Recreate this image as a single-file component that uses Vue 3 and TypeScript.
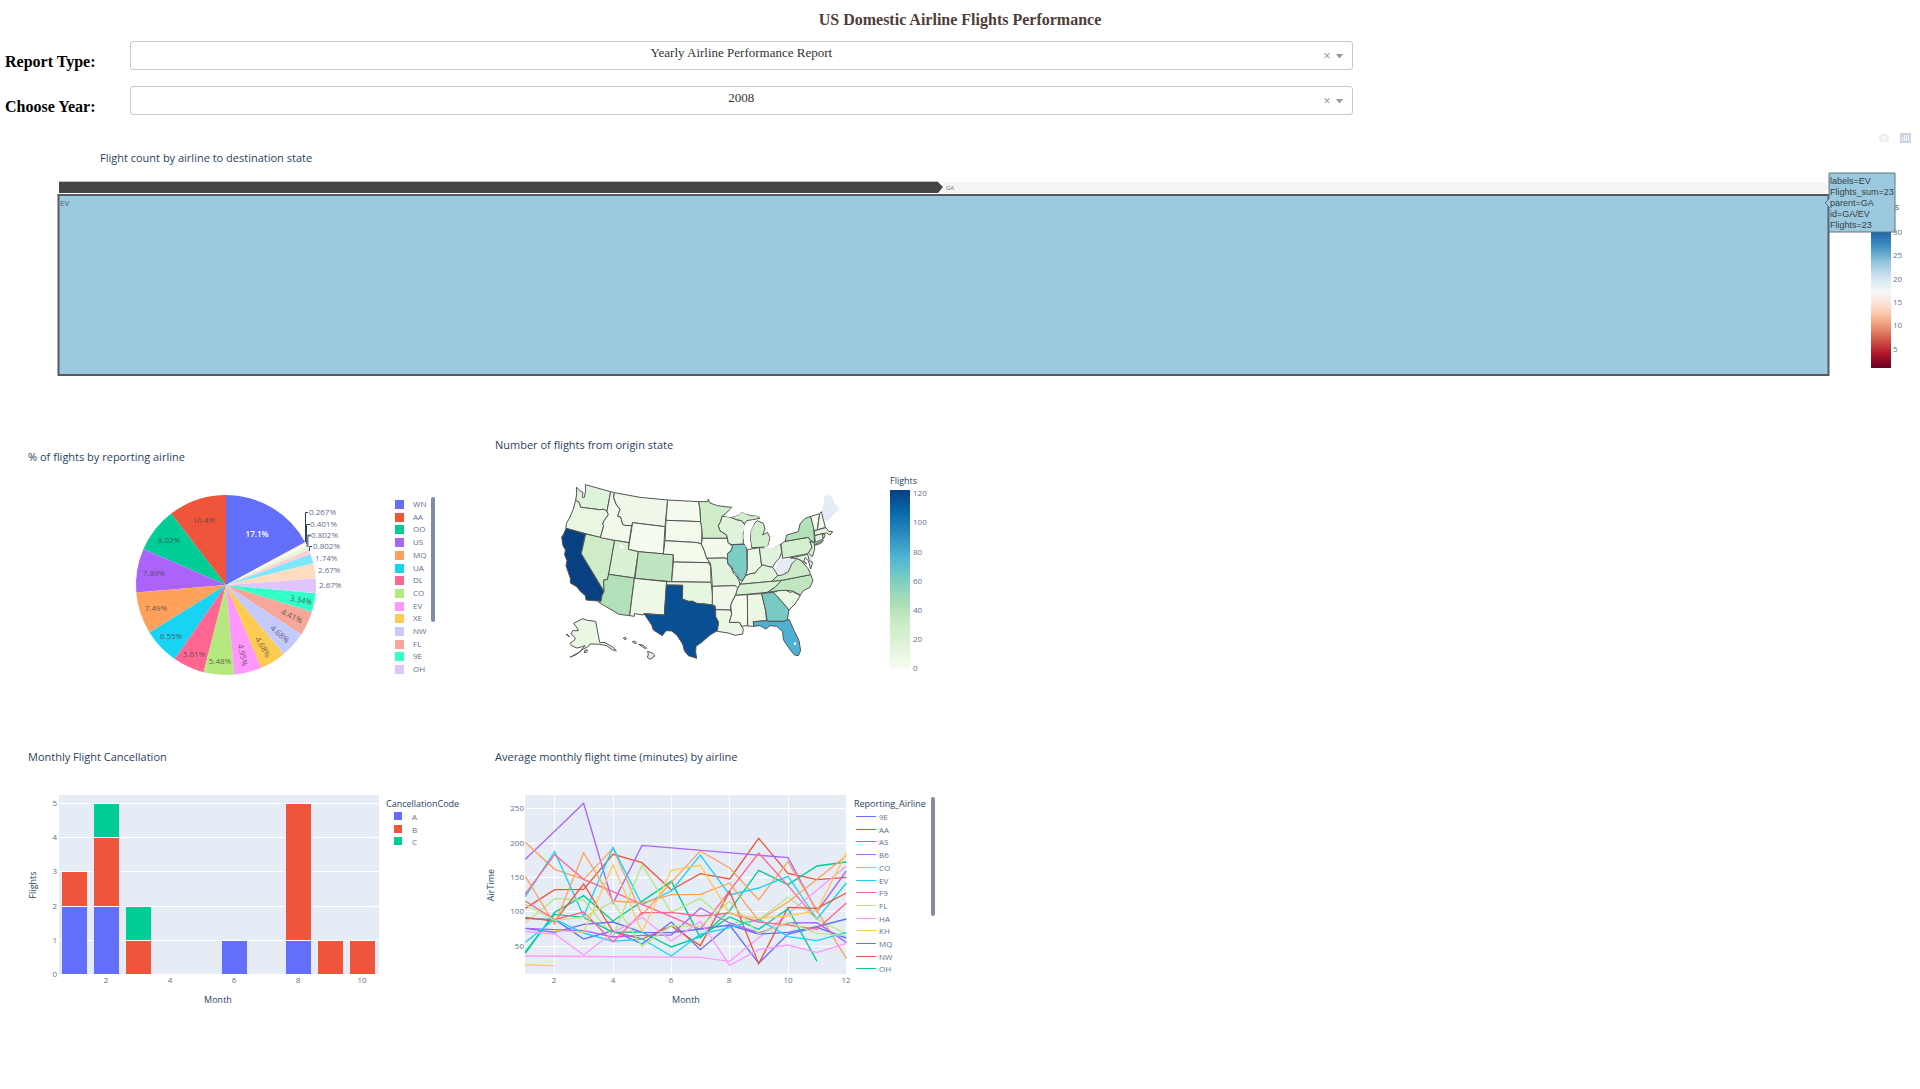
<script setup lang="ts">
import { ref } from 'vue'

const report = ref('Yearly Airline Performance Report')
const year = ref('2008')
const reports = ['Yearly Airline Performance Report', 'Yearly Airline Delay Report']
const years = Array.from({ length: 16 }, (_, i) => String(2005 + i))

const hoverLines = ['labels=EV', 'Flights_sum=23', 'parent=GA', 'id=GA/EV', 'Flights=23']

const rdbu = ['#053061', '#2166ac', '#4393c3', '#92c5de', '#d1e5f0', '#f7f7f7', '#fddbc7', '#f4a582', '#d6604d', '#b2182b', '#67001f']
const gnbu = ['#084081', '#0868ac', '#2b8cbe', '#4eb3d3', '#7bccc4', '#a8ddb5', '#ccebc5', '#e0f3db', '#f7fcf0']

const treeTicks = [
  { v: 30, y: 236 }, { v: 25, y: 259 }, { v: 20, y: 283 },
  { v: 15, y: 306 }, { v: 10, y: 329 }, { v: 5, y: 353 },
]
const mapTicks = [
  { v: 120, y: 497 }, { v: 100, y: 526 }, { v: 80, y: 556 }, { v: 60, y: 585 },
  { v: 40, y: 614 }, { v: 20, y: 643 }, { v: 0, y: 672 },
]

interface Slice { name: string; n: number; color: string }
const airlines: Slice[] = [
  { name: 'WN', n: 128, color: '#636efa' },
  { name: 'AA', n: 78, color: '#ef553b' },
  { name: 'OO', n: 60, color: '#00cc96' },
  { name: 'US', n: 59, color: '#ab63fa' },
  { name: 'MQ', n: 56, color: '#ffa15a' },
  { name: 'UA', n: 49, color: '#19d3f3' },
  { name: 'DL', n: 42, color: '#ff6692' },
  { name: 'CO', n: 41, color: '#b6e880' },
  { name: 'EV', n: 37, color: '#ff97ff' },
  { name: 'XE', n: 35, color: '#fecb52' },
  { name: 'NW', n: 35, color: '#c5cafd' },
  { name: 'FL', n: 33, color: '#f7a799' },
  { name: '9E', n: 25, color: '#33ffc9' },
  { name: 'OH', n: 20, color: '#dfc5fd' },
  { name: 'YV', n: 20, color: '#ffdbc0' },
  { name: 'B6', n: 13, color: '#7ee7f9' },
  { name: 'AS', n: 6, color: '#ffcbda' },
  { name: 'F9', n: 6, color: '#e6f7d4' },
  { name: 'HA', n: 3, color: '#fffaff' },
  { name: 'AQ', n: 2, color: '#ffe9ba' },
]
const cx = 226
const cy = 586
const radius = 90
const total = airlines.reduce((s, a) => s + a.n, 0)
const point = (t: number) => {
  const a = t * 2 * Math.PI
  return `${(cx + radius * Math.sin(a)).toFixed(1)},${(cy - radius * Math.cos(a)).toFixed(1)}`
}
// The largest slice sits right of twelve o'clock, the others run counter-clockwise from there.
let cursor = airlines[0].n / total
const slices = airlines.map((a) => {
  const end = cursor
  const start = end - a.n / total
  cursor = start
  return { name: a.name, color: a.color, d: `M${cx},${cy}L${point(start)}A${radius},${radius} 0 0 1 ${point(end)}Z` }
})

const pieLabels = [
  { t: '10.4%', x: 204, y: 521, r: 0 },
  { t: '8.02%', x: 169, y: 541, r: 0 },
  { t: '7.89%', x: 154, y: 574, r: 0 },
  { t: '7.49%', x: 156, y: 609, r: 0 },
  { t: '6.55%', x: 171, y: 637, r: 0 },
  { t: '5.61%', x: 194, y: 655, r: 0 },
  { t: '5.48%', x: 220, y: 662, r: 0 },
  { t: '4.95%', x: 243, y: 656, r: 77 },
  { t: '4.68%', x: 263, y: 648, r: 60 },
  { t: '4.68%', x: 280, y: 635, r: 42 },
  { t: '4.41%', x: 292, y: 617, r: 25 },
  { t: '3.34%', x: 301, y: 601, r: 11 },
]
const outerLabels = [
  { t: '0.267%', x: 309, y: 516 },
  { t: '0.401%', x: 310, y: 528 },
  { t: '0.802%', x: 311, y: 539 },
  { t: '0.802%', x: 313, y: 550 },
  { t: '1.74%', x: 315, y: 562 },
  { t: '2.67%', x: 318, y: 574 },
  { t: '2.67%', x: 319, y: 589 },
]
const legendY = (first: number, i: number) => Math.round(first + i * 12.7)

const states = [
  { id: 'WA', f: '#dff3da', p: '289,174 300,186 309,190 307,205 313,205 317,185 316,167 392,188 381,247 372,241 358,242 320,237 302,235 297,220 287,214 290,195' },
  { id: 'OR', f: '#e8f6e2', p: '287,214 297,220 302,235 320,237 358,242 372,241 381,247 385,257 373,274 368,285 371,290 361,326 258,298 259,283 268,268 280,240' },
  { id: 'CA', f: '#084081', p: '258,298 317,315 304,374 372,487 366,500 363,517 318,513 316,500 301,487 290,473 271,462 271,448 263,425 258,410 261,395 254,378 256,362 249,350 245,325 251,315' },
  { id: 'NV', f: '#ceecc7', p: '317,315 404,334 386,436 382,452 371,453 372,487 304,374' },
  { id: 'ID', f: '#f1f9ea', p: '392,188 403,191 401,206 408,225 420,241 413,262 422,264 428,286 434,289 455,290 447,341 404,334 361,326 371,290 368,285 373,274 385,257 381,247' },
  { id: 'MT', f: '#eff8e8', p: '403,191 480,205 563,213 555,293 458,281 455,290 434,289 428,286 422,264 413,262 420,241 408,225 401,206' },
  { id: 'WY', f: '#f5fbee', p: '458,281 555,293 550,375 475,368 445,361' },
  { id: 'UT', f: '#daf1d4', p: '404,334 447,341 445,361 475,368 463,447 386,436' },
  { id: 'CO', f: '#bfe6c0', p: '475,368 580,377 575,458 465,448' },
  { id: 'AZ', f: '#b2e1b9', p: '386,436 463,447 449,560 417,556 356,520 363,517 366,500 372,487 371,453 382,452' },
  { id: 'NM', f: '#eef8e7', p: '463,448 560,458 553,558 492,554 490,558 463,554 463,562 449,560' },
  { id: 'ND', f: '#f5fbee', p: '563,213 656,218 660,240 662,278 558,274' },
  { id: 'SD', f: '#f3faec', p: '558,274 662,278 666,300 665,345 652,341 640,340 555,335' },
  { id: 'NE', f: '#f3faec', p: '555,335 640,340 652,341 664,345 673,365 680,387 690,401 580,399 580,377 550,375' },
  { id: 'KS', f: '#f0f9e9', p: '580,399 686,401 692,413 693,460 575,458' },
  { id: 'OK', f: '#e6f6e0', p: '560,458 693,460 698,500 697,528 675,525 650,523 638,517 625,517 607,510 608,469 559,468' },
  { id: 'TX', f: '#084f93', p: '559,468 608,469 607,510 625,517 638,517 650,523 675,525 697,528 705,530 707,562 716,580 712,605 690,618 665,640 648,652 647,670 650,688 625,680 613,665 608,645 590,618 575,606 558,605 547,620 520,603 515,588 492,554 553,558' },
  { id: 'MN', f: '#d0edca', p: '656,218 684,218 684,210 690,222 712,230 735,233 757,235 735,255 726,262 722,278 715,290 720,305 740,318 741,328 667,328 666,305 662,278 660,240' },
  { id: 'IA', f: '#f1f9ea', p: '667,328 741,328 745,342 758,352 752,367 743,373 742,390 735,387 680,388 673,365 664,345' },
  { id: 'MO', f: '#e2f4dd', p: '680,388 735,387 742,390 744,405 756,420 760,433 768,440 776,452 780,466 772,480 765,470 697,472 693,413 690,401' },
  { id: 'AR', f: '#eff8e8', p: '697,472 765,470 775,478 767,497 757,517 752,530 752,543 707,542 705,530 697,528' },
  { id: 'LA', f: '#e9f7e3', p: '707,542 752,543 755,555 748,580 779,580 783,590 790,600 788,615 765,619 745,612 712,607 716,580 707,562' },
  { id: 'WI', f: '#dff3da', p: '735,262 752,265 770,272 785,275 793,285 797,295 790,312 790,345 755,347 745,342 740,318 720,305 715,290 722,278 726,262' },
  { id: 'IL', f: '#7bccc4', p: '755,347 795,346 800,360 802,420 797,440 788,455 778,452 770,436 758,425 757,415 744,405 742,390 743,373 752,367 758,352' },
  { id: 'MI', f: '#d1edcb', p: '815,356 811,330 812,305 822,285 832,275 850,283 855,300 848,318 862,310 870,325 866,345 860,354' },
  { id: 'MI-U', f: '#d1edcb', p: '752,265 775,258 785,248 798,255 815,260 830,260 840,268 818,272 800,275 793,285 785,275 770,272' },
  { id: 'IN', f: '#eaf7e4', p: '802,362 838,356 845,410 835,420 825,432 812,434 797,440 802,420' },
  { id: 'OH', f: '#e0f3db', p: '838,356 862,356 875,358 902,343 905,370 898,388 885,402 878,415 862,412 850,408 845,410' },
  { id: 'KY', f: '#e0f3db', p: '780,466 788,455 797,440 812,434 825,432 835,420 845,410 850,408 862,412 878,415 888,430 893,440 875,457' },
  { id: 'TN', f: '#d7f0d1', p: '767,499 772,480 780,466 875,457 905,454 885,475 862,490' },
  { id: 'MS', f: '#f4fbed', p: '767,499 802,497 803,555 802,590 785,592 779,580 748,580 755,555 752,530 757,517' },
  { id: 'AL', f: '#e9f7e3', p: '802,497 845,494 856,540 860,575 820,578 821,592 803,591' },
  { id: 'GA', f: '#78cac5', p: '845,494 880,490 890,500 912,525 927,543 922,572 912,577 862,577 856,540' },
  { id: 'FL', f: '#4cb1d2', p: '820,578 860,575 862,577 912,577 922,572 928,572 940,600 957,635 962,665 955,680 943,678 925,655 910,632 908,608 890,592 870,590 858,600 840,590 821,592' },
  { id: 'SC', f: '#e9f7e3', p: '880,490 895,485 918,484 930,490 938,488 961,500 945,525 927,543 912,525 890,500' },
  { id: 'NC', f: '#bfe6c0', p: '905,454 992,437 999,455 990,475 970,485 961,498 938,486 918,484 895,485 862,490 885,475' },
  { id: 'VA', f: '#cdecc6', p: '875,457 893,440 907,438 925,428 935,405 945,395 950,388 962,394 975,408 985,420 992,437 905,454' },
  { id: 'MD', f: '#e0f3db', p: '930,387 983,376 988,395 998,400 992,420 985,395 975,386 972,396 980,405 965,395 950,388' },
  { id: 'PA', f: '#d4efce', p: '903,345 915,337 985,325 992,335 990,342 998,352 985,372 975,376 908,388' },
  { id: 'NJ', f: '#d4efce', p: '990,336 1003,342 1004,360 997,383 985,372 996,355' },
  { id: 'NY', f: '#b2e1b9', p: '915,337 920,318 955,308 960,285 975,268 992,262 1000,290 1004,340 992,335 985,325' },
  { id: 'NY-L', f: '#b2e1b9', p: '1005,346 1030,334 1022,343 1006,349' },
  { id: 'VT', f: '#f4fbed', p: '992,262 1019,254 1015,280 1012,303 1003,305' },
  { id: 'NH', f: '#f1f9ea', p: '1019,254 1024,248 1036,295 1012,303' },
  { id: 'MA', f: '#e4f5df', p: '1003,305 1038,296 1046,307 1058,308 1050,318 1040,312 1027,314 1004,320' },
  { id: 'CT', f: '#e4f5df', p: '1004,320 1027,314 1030,330 1006,340' },
  { id: 'RI', f: '#f1f9ea', p: '1027,314 1036,318 1030,330' },
  { id: 'AK', f: '#e9f7e3', p: '281,583 308,569 322,574 347,577 359,640 375,641 400,655 409,666 397,662 380,650 360,646 345,645 330,645 326,652 310,660 290,676 270,685 300,668 315,650 300,655 290,657 275,650 270,643 285,632 285,625 273,615 278,605 295,605 290,595' },
  { id: 'AK-A', f: '#e9f7e3', p: '258,615 264,618 269,623 263,621' },
  { id: 'AK-B', f: '#e9f7e3', p: '314,664 322,662 320,670 313,671' },
  { id: 'HI', f: '#dff3da', p: '503,667 517,672 525,681 510,691 502,685 505,677' },
  { id: 'HI-A', f: '#dff3da', p: '430,627 436,625 439,630 434,632' },
  { id: 'HI-B', f: '#dff3da', p: '457,638 464,636 470,642 462,643' },
  { id: 'HI-C', f: '#dff3da', p: '476,646 486,648 492,650 496,654 500,658 492,657 484,651' },
]

interface Bar { m: number; from: number; to: number; color: string }
const codes = [
  { name: 'A', color: '#636efa' },
  { name: 'B', color: '#ef553b' },
  { name: 'C', color: '#00cc96' },
]
const bars: Bar[] = [
  { m: 1, from: 0, to: 2, color: '#636efa' },
  { m: 1, from: 2, to: 3, color: '#ef553b' },
  { m: 2, from: 0, to: 2, color: '#636efa' },
  { m: 2, from: 2, to: 4, color: '#ef553b' },
  { m: 2, from: 4, to: 5, color: '#00cc96' },
  { m: 3, from: 0, to: 1, color: '#ef553b' },
  { m: 3, from: 1, to: 2, color: '#00cc96' },
  { m: 6, from: 0, to: 1, color: '#636efa' },
  { m: 8, from: 0, to: 1, color: '#636efa' },
  { m: 8, from: 1, to: 5, color: '#ef553b' },
  { m: 9, from: 0, to: 1, color: '#ef553b' },
  { m: 10, from: 0, to: 1, color: '#ef553b' },
]
const barY = (v: number) => Math.round(975 - v * 34.2)
const barX = (m: number) => 42 + m * 32

const palette = ['#636efa', '#ef553b', '#00cc96', '#ab63fa', '#ffa15a', '#19d3f3', '#ff6692', '#b6e880', '#ff97ff', '#fecb52']
const carriers = ['9E', 'AA', 'AS', 'B6', 'CO', 'EV', 'F9', 'FL', 'HA', 'KH', 'MQ', 'NW', 'OH']
// One row per carrier: first month followed by heights on the plot; null skips a month.
const series: { start: number; ys: (number | null)[] }[] = [
  { start: 1, ys: [539, 541, 600, 575, 615, 549, 632, 558, 673, 585, 565, 597] },
  { start: 1, ys: [508, 452, 451, 346, 371, 453, 404, 420, 298, 403, 422, 415] },
  { start: 1, ys: [643, 520, 470, 546, 487, 427, 596, 515, 394, 437, 381, 369] },
  { start: 1, ys: [361, 277, 193, 493, 319, null, null, null, null, 356, 518, 396] },
  { start: 1, ys: [310, 391, 421, 328, 528, 430, 336, 387, 482, 368, 515, 659] },
  { start: 1, ys: [473, 338, 531, 325, 497, 456, 348, 468, 447, 412, 540, 432] },
  { start: 1, ys: [465, 347, 421, 458, 496, 533, 571, 455, 342, 440, 542] },
  { start: 1, ys: [552, 479, 483, 592, 378, 520, 478, 555, 543, 475, 540, 585] },
  { start: 1, ys: [651, null, null, null, null, null, 655, 667, 596, 525, 453, 381] },
  { start: 1, ys: [678, 680] },
  { start: 1, ys: [568, 580, 556, 549, 580, 581, 570, 558, 585, 580, 563, 540] },
  { start: 1, ys: [535, 547, 435, 578, 600, 561, 620, 457, 674, 505, 508, 462] },
  { start: 1, ys: [638, 526, 535, 580, 579, 624, 593, 534, 571, 509, 667] },
  { start: 1, ys: [568, 572, 575, 594, 589, 588, 507, 552, 582, 552, 551, 610] },
  { start: 1, ys: [412, 556, 341, 486, 492, 467, 466, 432, 545, 489, 421, 350] },
  { start: 1, ys: [610, 541, 582, 607, 600, 651, 585, 566, 541, 593, 605, 580] },
  { start: 1, ys: [486, 542, 519, 609, 521, 520, 531, 522, 549, 558, 571, 492] },
  { start: 1, ys: [497, 544, 535, 488, 622, 560, 562, 487, 585, 550, 583, 590] },
  { start: 1, ys: [578, 585, 648, 580, 535, 606, 547, 679, 632, 618, 641, 613] },
  { start: 2, ys: [575, 580, 378, 578, 394, 379, 523, 538, 531, 515, 342] },
]
const lines = series.map((s, i) => ({
  color: palette[i % palette.length],
  points: s.ys
    .map((y, k) => (y === null ? '' : `${Math.round(136 + (s.start - 1 + k) * 87.5)},${y}`))
    .filter(Boolean)
    .join(' '),
}))
const airTicks = [{ v: 250, y: 809 }, { v: 200, y: 844 }, { v: 150, y: 878 }, { v: 100, y: 912 }, { v: 50, y: 947 }]
const monthTicks = [2, 4, 6, 8, 10, 12]
const lineX = (m: number) => Math.round(525 + (m - 1) * 29.2)
</script>

<template>
  <main class="page">
    <h1>US Domestic Airline Flights Performance</h1>

    <form class="filters" @submit.prevent>
      <label for="report">Report Type:</label>
      <div class="dropdown">
        <select id="report" v-model="report">
          <option v-for="r in reports" :key="r">{{ r }}</option>
        </select>
        <span class="controls">
          <button type="button" aria-label="Clear report type">×</button>
          <svg width="7" height="4" viewBox="0 0 7 4" aria-hidden="true"><path d="M0 0H7L4 4H3Z" fill="#999" /></svg>
        </span>
      </div>
      <label for="year">Choose Year:</label>
      <div class="dropdown">
        <select id="year" v-model="year">
          <option v-for="y in years" :key="y">{{ y }}</option>
        </select>
        <span class="controls">
          <button type="button" aria-label="Clear year">×</button>
          <svg width="7" height="4" viewBox="0 0 7 4" aria-hidden="true"><path d="M0 0H7L4 4H3Z" fill="#999" /></svg>
        </span>
      </div>
    </form>

    <div class="modebar">
      <button type="button" aria-label="Download plot as a png">
        <svg width="10" height="10" viewBox="0 0 10 10">
          <path d="M3 1H7L8 2H9Q10 2 10 3V8Q10 9 9 9H1Q0 9 0 8V3Q0 2 1 2H2Z" fill="#eeeeef" />
          <ellipse cx="5" cy="5.5" rx="1.7" ry="2.1" fill="none" stroke="#fff" />
        </svg>
      </button>
      <button type="button" aria-label="Produced with Plotly">
        <svg width="11" height="10" viewBox="0 0 11 10">
          <rect width="11" height="10" fill="#cbd3de" />
          <path d="M2.5 4V8M4.5 2V8M6.5 2V8M8.5 2V8" stroke="#fff" stroke-width=".8" />
        </svg>
      </button>
    </div>

    <figure class="tree">
      <figcaption>Flight count by airline to destination state</figcaption>
      <svg viewBox="0 166 1920 224" role="img" aria-label="Treemap of flights">
        <defs>
          <linearGradient id="rdbu" x1="0" y1="0" x2="0" y2="1">
            <stop v-for="(c, i) in rdbu" :key="c" :offset="i / 10" :stop-color="c" />
          </linearGradient>
        </defs>
        <path d="M943 183H1824L1829 188L1824 194H938Z" fill="#f5f4f2" />
        <path d="M59 183H938L943 188L938 194H59Z" fill="#444" />
        <path d="M59 182.5H938" stroke="#b9c2be" />
        <text x="946" y="191" class="xs">GA</text>
        <rect x="58.5" y="196" width="1770" height="180" fill="#9bc9df" stroke="#555a5e" stroke-width="2" />
        <text x="60" y="207" class="tick dark">EV</text>
        <text x="1899" y="211" class="axis" text-anchor="end">Flights</text>
        <rect x="1871" y="218" width="20" height="151" fill="url(#rdbu)" />
        <text v-for="t in treeTicks" :key="t.v" x="1893" :y="t.y" class="tick">{{ t.v }}</text>
        <path d="M1829 174H1895V233H1829V208L1825 204L1829 200Z" fill="#9bc9df" stroke="#5f7680" />
        <text v-for="(l, i) in hoverLines" :key="l" x="1830" :y="185 + i * 11" class="hover">{{ l }}</text>
      </svg>
    </figure>

    <section class="row">
      <figure class="low">
        <figcaption>% of flights by reporting airline</figcaption>
        <svg viewBox="0 468 480 232" role="img" aria-label="Share of flights by airline">
          <path v-for="s in slices" :key="s.name" :d="s.d" :fill="s.color" />
          <text x="257" y="538" class="tick white" text-anchor="middle">17.1%</text>
          <text
            v-for="l in pieLabels" :key="l.x" class="tick inner" text-anchor="middle"
            :transform="`translate(${l.x} ${l.y}) rotate(${l.r})`" y="3"
          >{{ l.t }}</text>
          <text v-for="l in outerLabels" :key="l.y" :x="l.x" :y="l.y" class="tick">{{ l.t }}</text>
          <g fill="none" stroke="#2a3f5f">
            <path d="M305.5 543V513.5H308" />
            <path d="M306.5 545V525.5H310" />
            <path d="M307.5 548V536.5H311" stroke-width="2" stroke="#6b7d92" />
            <path d="M309.5 552V547.5H312" />
          </g>
          <g v-for="(a, i) in airlines.slice(0, 14)" :key="a.name">
            <rect x="395" :y="legendY(501, i)" width="9" height="9" :fill="a.color" />
            <text x="413" :y="legendY(508, i)" class="tick">{{ a.name }}</text>
          </g>
          <rect x="431" y="498" width="4" height="125" rx="2" fill="#808ba4" />
        </svg>
      </figure>

      <figure class="high">
        <figcaption>Number of flights from origin state</figcaption>
        <svg viewBox="480 468 480 232" role="img" aria-label="Map of flights by origin state">
          <defs>
            <linearGradient id="gnbu" x1="0" y1="0" x2="0" y2="1">
              <stop v-for="(c, i) in gnbu" :key="c" :offset="i / 8" :stop-color="c" />
            </linearGradient>
          </defs>
          <svg x="480" y="430" width="480" height="270" viewBox="0 0 1440 810">
            <polygon points="1024,248 1030,230 1033,203 1042,198 1055,200 1063,222 1079,240 1060,258 1037,282" fill="#e5ecf6" />
            <polygon points="905,385 910,393 930,390 935,384 947,386 940,398 930,412 922,430 905,438 893,438 885,425 890,405" fill="#e5ecf6" />
            <polygon points="982,378 990,376 999,395 990,396" fill="#e5ecf6" />
            <g stroke="#555" stroke-width="3" stroke-linejoin="round">
              <polygon v-for="s in states" :key="s.id" :points="s.p" :fill="s.f" />
            </g>
            <path d="M735 262L757 235L775 230L805 237L832 252L842 262L815 258L798 255L785 248L775 258L752 265Z" fill="#fff" />
            <path d="M793 288L818 274L822 285L812 305L810 330L813 352L805 360L796 350L790 325Z" fill="#fff" />
            <path d="M842 262L850 280L866 300L872 325L866 348L850 357L875 360L905 342L917 320L890 300Z" fill="#fff" />
            <path d="M420 346L431 351L428 362L421 357Z" fill="#fff" />
            <circle cx="945" cy="644" r="4" fill="#fff" />
          </svg>
          <text x="890" y="485" class="axis">Flights</text>
          <rect x="890" y="491" width="20" height="178" fill="url(#gnbu)" />
          <text v-for="t in mapTicks" :key="t.v" x="913" :y="t.y" class="tick">{{ t.v }}</text>
        </svg>
      </figure>
    </section>

    <section class="row">
      <figure>
        <figcaption>Monthly Flight Cancellation</figcaption>
        <svg viewBox="0 768 480 252" role="img" aria-label="Cancelled flights by month">
          <rect x="59" y="796" width="320" height="179" fill="#e5ecf6" />
          <g v-for="v in [0, 1, 2, 3, 4, 5]" :key="v">
            <rect x="59" :y="barY(v)" width="320" height="1" fill="#fff" />
            <text x="57" :y="barY(v) + 3" class="tick" text-anchor="end">{{ v }}</text>
          </g>
          <rect
            v-for="b in bars" :key="`${b.m}-${b.from}`" :x="barX(b.m) - 12" :width="25"
            :y="barY(b.to) + 1" :height="barY(b.from) - barY(b.to) - 1" :fill="b.color"
          />
          <text v-for="m in [2, 4, 6, 8, 10]" :key="m" :x="barX(m)" y="984" class="tick" text-anchor="middle">{{ m }}</text>
          <text x="218" y="1004" class="axis" text-anchor="middle">Month</text>
          <text transform="translate(36 886) rotate(-90)" class="axis" text-anchor="middle">Flights</text>
          <text x="386" y="808" class="axis">CancellationCode</text>
          <g v-for="(c, i) in codes" :key="c.name">
            <rect x="394" :y="legendY(813, i)" width="8" height="8" :fill="c.color" />
            <text x="412" :y="legendY(821, i)" class="tick">{{ c.name }}</text>
          </g>
        </svg>
      </figure>

      <figure>
        <figcaption>Average monthly flight time (minutes) by airline</figcaption>
        <svg viewBox="480 768 480 252" role="img" aria-label="Average air time by month">
          <rect x="525" y="796" width="321" height="179" fill="#e5ecf6" />
          <g v-for="t in airTicks" :key="t.v">
            <rect x="525" :y="t.y" width="321" height="1" fill="#fff" />
            <text x="524" :y="t.y + 3" class="tick" text-anchor="end">{{ t.v }}</text>
          </g>
          <g v-for="m in monthTicks" :key="m">
            <rect :x="lineX(m)" y="796" width="1" height="179" fill="#fff" />
            <text :x="lineX(m)" y="984" class="tick" text-anchor="middle">{{ m }}</text>
          </g>
          <svg x="480" y="740" width="480" height="290" viewBox="0 0 1440 870">
            <g fill="none" stroke-width="4" stroke-linejoin="miter">
              <polyline v-for="(l, i) in lines" :key="i" :points="l.points" :stroke="l.color" />
            </g>
          </svg>
          <text x="686" y="1004" class="axis" text-anchor="middle">Month</text>
          <text transform="translate(494 886) rotate(-90)" class="axis" text-anchor="middle">AirTime</text>
          <text x="854" y="808" class="axis">Reporting_Airline</text>
          <g v-for="(c, i) in carriers" :key="c">
            <rect x="856" :y="legendY(817, i)" width="20" height="1" :fill="palette[i % 10]" />
            <text x="879" :y="legendY(821, i)" class="tick">{{ c }}</text>
          </g>
          <rect x="931" y="798" width="4" height="119" rx="2" fill="#808ba4" />
        </svg>
      </figure>
    </section>
  </main>
</template>

<style>
body {
  margin: 0;
  background: #fff;
}
</style>

<style scoped>
.page {
  font-family: "Liberation Serif", "Times New Roman", serif;
  padding-bottom: 20px;
}
h1 {
  margin: 0;
  padding: 8px 0 10px;
  font-size: 16px;
  line-height: 23px;
  text-align: center;
  color: #503d36;
}
.filters {
  display: grid;
  grid-template-columns: 125px 64%;
  grid-auto-rows: 31px;
  row-gap: 14px;
  padding-left: 5px;
}
.filters label {
  padding-top: 11px;
  font-size: 16px;
  font-weight: bold;
  line-height: 20px;
  color: #000;
}
.dropdown {
  position: relative;
  height: 29px;
  margin-right: 3px;
}
.dropdown select {
  box-sizing: border-box;
  width: 100%;
  height: 29px;
  padding: 0 0 6px;
  border: 1px solid #c8c8c8;
  border-radius: 3px;
  appearance: none;
  background: #fff;
  font-family: inherit;
  font-size: 13px;
  text-align: center;
  text-align-last: center;
  color: #333;
}
.controls {
  position: absolute;
  top: 5px;
  right: 10px;
  display: flex;
  align-items: center;
  gap: 5px;
  height: 20px;
}
button {
  display: block;
  padding: 0;
  border: 0;
  background: none;
  color: #999;
  font-family: "Liberation Sans", Arial, sans-serif;
  font-size: 12px;
  line-height: 20px;
}
.modebar {
  display: flex;
  justify-content: flex-end;
  align-items: center;
  gap: 11px;
  height: 20px;
  margin-top: 11px;
  padding-right: 9px;
}
.modebar svg {
  display: block;
}
figure {
  margin: 0;
}
figure > svg {
  display: block;
  width: 100%;
}
figcaption {
  font-family: "Open Sans", verdana, arial, sans-serif;
  font-size: 11px;
  line-height: 20px;
  color: #2a3f5f;
}
.tree figcaption {
  padding-left: 100px;
  height: 17px;
}
.row {
  display: grid;
  grid-template-columns: 25% 25%;
  margin-top: 48px;
}
.tree + .row {
  margin-top: 46px;
}
.row figcaption {
  padding-left: 28px;
}
.row figure + figure figcaption {
  padding-left: 15px;
}
.low figcaption {
  padding-top: 12px;
}
.high figcaption {
  padding-bottom: 12px;
}
text {
  font-family: "Open Sans", verdana, arial, sans-serif;
}
.tick {
  font-size: 8px;
  fill: #5f7089;
}
.dark,
.inner {
  fill: #444;
  fill-opacity: 0.8;
}
.white {
  fill: #fff;
  font-weight: 600;
}
.axis {
  font-size: 9px;
  fill: #2a3f5f;
}
.xs {
  font-size: 6px;
  fill: #777;
}
.hover {
  font-family: "Liberation Sans", Arial, sans-serif;
  font-size: 9px;
  fill: #3b3f42;
}
</style>
